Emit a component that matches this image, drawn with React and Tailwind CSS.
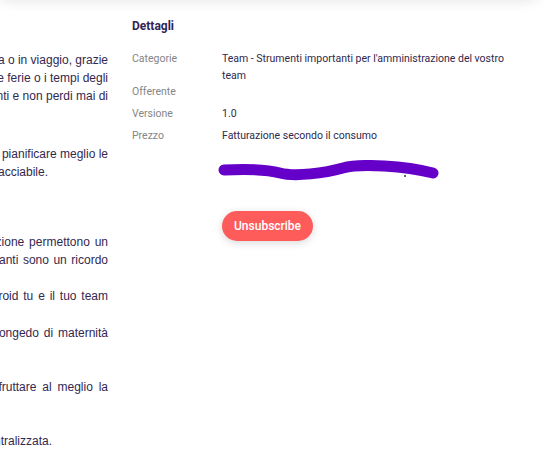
import React from 'react';

// Lines of the description column; the column is wider than the page and
// pushed left, so only the right edge of each justified line shows.
const Line = ({ text, className = '' }) => (
  <div className={`whitespace-nowrap text-right ${className}`}>{text}</div>
);

const details = [
  { label: 'Categorie', value: "Team - Strumenti importanti per l'amministrazione del vostro team", cls: '' },
  { label: 'Offerente', value: '', cls: '-mt-px' },
  { label: 'Versione', value: '1.0', cls: 'mt-[5px]' },
  { label: 'Prezzo', value: 'Fatturazione secondo il consumo', cls: 'mt-[5px]' },
];

export default function App() {
  return (
    <div className="w-[556px] h-[468px] overflow-hidden bg-white">
      {/* header bar above the fold, only its shadow shows */}
      <div className="w-[542px] h-5 -mt-5 rounded-br-2xl bg-white shadow-[0_0_14px_rgba(0,0,0,0.12)]" />

      <div className="flex">
        <div
          className="w-[500px] shrink-0 -ml-[392px] pt-[51px] text-[12px] leading-[18px] text-[#33284f]"
          style={{ fontFamily: '"Liberation Sans", Arial, sans-serif' }}
        >
          <div>
            <Line text="Che tu sia in ufficio, in trasferta, in riunione, a casa o in viaggio, grazie" />
            <Line text="all'app mobile vedi in tempo reale le richieste delle ferie o i tempi degli" />
            <Line text="straordinari dei tuoi colleghi, gestisci tutti i documenti e non perdi mai di" />
            <div>vista le scadenze.</div>
          </div>

          <div className="mt-[22px]">
            <Line text="Il calendario condiviso del team ti aiuta a pianificare meglio le" />
            <Line className="pr-[60px]" text="risorse e rende ogni assenza trasparente e tracciabile." />
          </div>

          <div className="mt-[17px] font-bold">I vantaggi in breve</div>

          <div className="mt-[17px]">
            <Line className="[word-spacing:1.5px]" text="Le funzioni integrate di pianificazione e registrazione permettono un" />
            <Line className="[word-spacing:1.2px]" text="controllo immediato: tabelle Excel e fogli volanti sono un ricordo" />
            <div>del passato.</div>
          </div>

          <div>
            <Line className="[word-spacing:1.5px]" text="– Con le app gratuite per smartphone iOS e Android tu e il tuo team" />
            <div>siete sempre connessi.</div>
          </div>

          <div className="mt-px">
            <Line className="[word-spacing:1.5px]" text="– Ferie, malattia, straordinari, permessi, congedo di maternità" />
            <div>e paternità in un unico posto.</div>
          </div>

          <div className="mt-[18px]">
            <Line className="[word-spacing:2.5px]" text="– Report e statistiche chiare ti aiutano a sfruttare al meglio la" />
            <div>capacità del team.</div>
          </div>

          <div className="mt-[18px]">
            <Line className="pr-[56px]" text="– Tutta la documentazione del personale in una sede centralizzata." />
          </div>
        </div>

        <div className="ml-6 pt-[17px]" style={{ fontFamily: 'Roboto, "Noto Sans", sans-serif' }}>
          <h3 className="text-[12px] leading-[18px] font-bold text-[#2f2458]">Dettagli</h3>

          <div className="mt-[15px] flex flex-col text-[10.5px] leading-[17px]">
            {details.map((d) => (
              <div key={d.label} className={`flex ${d.cls}`}>
                <div className="w-[90px] shrink-0 text-[#858585]">{d.label}</div>
                <div className="w-[300px] text-[#30294d]">{d.value}</div>
              </div>
            ))}
          </div>

          {/* scribbled-out link */}
          <svg width="232" height="26" viewBox="0 0 232 26" className="mt-[16px] ml-[83px]">
            <path
              d="M9 10 C 30 9, 50 9, 65 13 S 110 13, 128 8 S 190 6, 218 13"
              fill="none"
              stroke="#6500c9"
              strokeWidth="11"
              strokeLinecap="round"
              strokeLinejoin="round"
            />
            <circle cx="190" cy="16" r="0.9" fill="#222" />
          </svg>

          <button className="mt-[25px] ml-[90px] h-[30px] px-3 rounded-full bg-[#fe5b5b] text-white text-[12px] font-medium shadow-[0_2px_8px_rgba(0,0,0,0.15)]">
            Unsubscribe
          </button>
        </div>
      </div>
    </div>
  );
}
